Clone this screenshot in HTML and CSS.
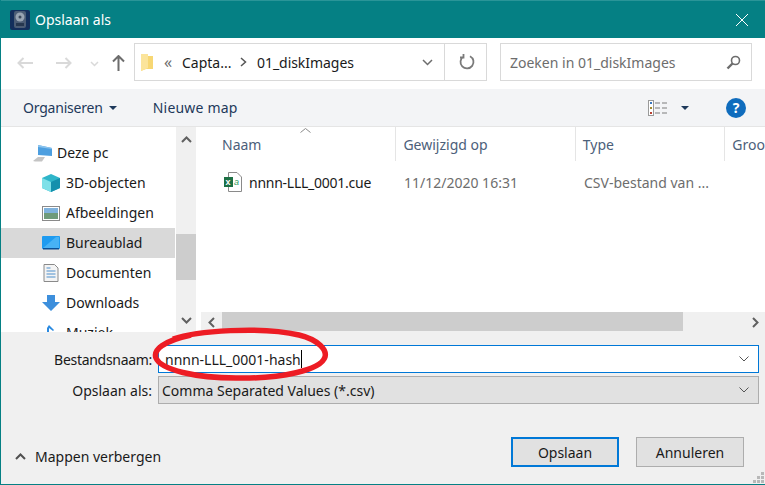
FILE: index.html
```html
<!DOCTYPE html>
<html lang="en">
<head>
    <meta name="viewport" content="width=device-width, initial-scale=1.0">
    <title>Opslaan als</title>
    <link rel="stylesheet" href="styles.css">
</head>
<body>
<div class="window">
    <div class="titlebar">
        <svg class="app-icon" width="20" height="20" viewBox="0 0 20 20">
            <rect width="20" height="20" rx="2" fill="#132f5c"/>
            <rect x="4" y="1" width="12" height="17" rx="2" fill="#4c5d75"/>
            <circle cx="10" cy="7" r="4.500" fill="#98a4b2"/>
            <circle cx="10" cy="7" r="1.500" fill="#3c4a5c"/>
            <rect x="6" y="13" width="8" height="3" fill="#26374f"/>
        </svg>
        <span class="title">Opslaan als</span>
        <svg class="close" width="12" height="12" viewBox="0 0 12 12"><path d="M0 0L12 12M12 0L0 12" stroke="#fff" fill="none"/></svg>
    </div>

    <div class="navbar">
        <svg class="nav-back" width="16" height="12" viewBox="0 0 16 12"><path d="M6.500 1L1.500 6L6.500 11M1.500 6H16" stroke="#d9d9d9" stroke-width="2" fill="none"/></svg>
        <svg class="nav-forward" width="16" height="12" viewBox="0 0 16 12"><path d="M9.500 1L14.500 6L9.500 11M14.500 6H0" stroke="#d9d9d9" stroke-width="2" fill="none"/></svg>
        <svg class="nav-recent" width="9" height="6" viewBox="0 0 9 6"><path d="M1 1L4.500 4.500L8 1" stroke="#d9d9d9" stroke-width="1.500" fill="none"/></svg>
        <svg class="nav-up" width="13" height="16" viewBox="0 0 13 16"><path d="M1 6.500L6.500 1L12 6.500M6.500 1V16" stroke="#6d6d6d" stroke-width="2" fill="none"/></svg>
        <div class="address">
            <svg class="folder" width="13" height="18" viewBox="0 0 13 18"><path d="M0 1H7V3H12V16H5L0 18Z" fill="#f7d774"/><path d="M0 1H7V15L0 18Z" fill="#fbe49b"/></svg>
            <span class="crumb-more">«</span>
            <span class="crumb-first">Capta...</span>
            <svg class="crumb-sep" width="7" height="10" viewBox="0 0 7 10"><path d="M1 1L5.500 5L1 9" stroke="#555" stroke-width="1.500" fill="none"/></svg>
            <span class="crumb-last">01_diskImages</span>
            <svg class="addr-drop" width="11" height="7" viewBox="0 0 11 7"><path d="M1 1L5.500 5.500L10 1" stroke="#6d6d6d" stroke-width="1.500" fill="none"/></svg>
            <div class="refresh">
                <svg width="16" height="16" viewBox="0 0 16 16"><path d="M4.500 2.500A6.500 6.500 0 1 0 11 2.200M4.500 0V3.500H1" stroke="#7a7a7a" stroke-width="1.800" fill="none"/></svg>
            </div>
        </div>
        <div class="search">
            <span>Zoeken in 01_diskImages</span>
            <svg width="15" height="15" viewBox="0 0 15 15"><circle cx="9.500" cy="5.500" r="4" stroke="#6d6d6d" stroke-width="1.600" fill="none"/><path d="M6.500 8.500L1.500 13.500" stroke="#6d6d6d" stroke-width="2.400"/></svg>
        </div>
    </div>

    <div class="toolbar">
        <span class="tool-org">Organiseren</span>
        <span class="caret"></span>
        <span class="tool-new">Nieuwe map</span>
        <svg class="view-icon" width="19" height="16" viewBox="0 0 19 16">
            <rect x=".5" y=".5" width="5" height="15" fill="#fff" stroke="#9a9a9a"/>
            <rect x="2" y="2" width="2" height="2" fill="#3a78c0"/>
            <rect x="2" y="7" width="2" height="2" fill="#a08a30"/>
            <rect x="2" y="12" width="2" height="2" fill="#b84030"/>
            <path d="M7 3H12M14 3H19M7 8H12M14 8H19M7 13H12M14 13H19" stroke="#7d7d7d"/>
        </svg>
        <span class="caret caret-view"></span>
        <span class="help">?</span>
    </div>

    <div class="main">
        <div class="sidebar">
            <div class="nav-row nav-root">
                <svg width="20" height="18" viewBox="0 0 20 18"><path d="M1 17L6 13H13L10 17.500H3Z" fill="#c4c4c4"/><path d="M6 1L20 4V12L6 11Z" fill="#4d9fe0"/><path d="M6 1L20 4V5L6 3Z" fill="#8cc4ee"/></svg>
                <span>Deze pc</span>
            </div>
            <div class="nav-row">
                <svg width="18" height="18" viewBox="0 0 18 18"><path d="M9 0L18 4V14L9 18L0 14V4Z" fill="#2fb5c9"/><path d="M0 4L9 8V18L0 14Z" fill="#7ee0e8"/><path d="M9 8L18 4V14L9 18Z" fill="#1590ad"/></svg>
                <span>3D-objecten</span>
            </div>
            <div class="nav-row">
                <svg width="18" height="15" viewBox="0 0 18 15"><rect x=".5" y=".5" width="17" height="14" fill="#fff" stroke="#8a8a8a"/><rect x="2" y="2" width="14" height="5" fill="#7fb2dd"/><rect x="2" y="7" width="14" height="6" fill="#6f9a7a"/></svg>
                <span>Afbeeldingen</span>
            </div>
            <div class="nav-row nav-selected">
                <svg width="18" height="14" viewBox="0 0 18 14"><rect width="18" height="13" rx="1" fill="#1e9bf0"/><rect x="1" y="12" width="16" height="1.500" fill="#0a4f96"/><path d="M1 12L14 1H17V12Z" fill="#47b2f5"/></svg>
                <span>Bureaublad</span>
            </div>
            <div class="nav-row">
                <svg width="15" height="18" viewBox="0 0 15 18"><path d="M.5.500H11L14.500 4V17.500H.5Z" fill="#f4f4f4" stroke="#8a8a8a"/><path d="M3 4H7M3 7H12M3 10H12M3 13H12" stroke="#4d8fcc"/></svg>
                <span>Documenten</span>
            </div>
            <div class="nav-row">
                <svg width="18" height="16" viewBox="0 0 18 16"><path d="M5 0H13V7H18L9 16L0 7H5Z" fill="#3d8fdc"/></svg>
                <span>Downloads</span>
            </div>
            <div class="nav-row">
                <svg width="18" height="18" viewBox="0 0 18 18"><path d="M7 1V13H5V4Z" fill="#2b8ae0"/><path d="M7 1L12 6L11 7L7 4Z" fill="#2b8ae0"/></svg>
                <span>Muziek</span>
            </div>
        </div>
        <div class="vscroll">
            <svg width="11" height="7" viewBox="0 0 11 7"><path d="M1 6L5.500 1.500L10 6" stroke="#606060" stroke-width="2" fill="none"/></svg>
            <div class="vthumb"></div>
            <svg class="vdown" width="11" height="7" viewBox="0 0 11 7"><path d="M1 1L5.500 5.500L10 1" stroke="#606060" stroke-width="2" fill="none"/></svg>
        </div>
        <div class="files">
            <div class="list">
                <div class="cols">
                    <svg class="sort" width="11" height="5" viewBox="0 0 11 5"><path d="M.5 4.500L5.500 .5L10.500 4.500" stroke="#8a8a8a" fill="none"/></svg>
                    <div class="col col-name">Naam</div>
                    <div class="col col-date">Gewijzigd op</div>
                    <div class="col col-type">Type</div>
                    <div class="col col-group">Groo</div>
                </div>
                <div class="file">
                    <div class="cell-name">
                        <svg width="18" height="20" viewBox="0 0 18 20"><path d="M4.500.5H13L17.500 5V19.500H4.500Z" fill="#fff" stroke="#8a8a8a"/><rect y="5" width="9" height="10" fill="#1d7044"/><text x="1.500" y="13" class="xl">x</text><text x="10" y="13" class="xa">a</text></svg>
                        <span class="file-name">nnnn-LLL_0001.cue</span>
                    </div>
                    <div class="cell-date">11/12/2020 16:31</div>
                    <div class="cell-type">CSV-bestand van ...</div>
                </div>
            </div>
            <div class="hscroll">
                <svg width="7" height="11" viewBox="0 0 7 11"><path d="M6 1L1.500 5.500L6 10" stroke="#606060" stroke-width="2" fill="none"/></svg>
                <div class="hthumb"></div>
                <svg width="7" height="11" viewBox="0 0 7 11"><path d="M1 1L5.500 5.500L1 10" stroke="#606060" stroke-width="2" fill="none"/></svg>
            </div>
        </div>
    </div>

    <div class="bottom">
        <div class="fields">
            <label class="field-label label-name">Bestandsnaam:</label>
            <div class="combo combo-active">
                <span>nnnn-LLL_0001-hash</span><span class="cursor"></span>
                <svg width="10" height="6" viewBox="0 0 10 6"><path d="M.5.5L5 5L9.500.5" stroke="#555" fill="none"/></svg>
            </div>
            <label class="field-label">Opslaan als:</label>
            <div class="combo combo-type">
                <span>Comma Separated Values (*.csv)</span>
                <svg width="10" height="6" viewBox="0 0 10 6"><path d="M.5.5L5 5L9.500.5" stroke="#555" fill="none"/></svg>
            </div>
        </div>
        <div class="actions">
            <svg class="hide-arrow" width="11" height="7" viewBox="0 0 11 7"><path d="M1 6L5.500 1.500L10 6" stroke="#505050" stroke-width="2" fill="none"/></svg>
            <span class="hide-folders">Mappen verbergen</span>
            <button type="button" class="btn btn-default">Opslaan</button>
            <button type="button" class="btn">Annuleren</button>
        </div>
        <svg class="grip" width="12" height="12" viewBox="0 0 12 12" fill="#b8b8b8">
            <rect x="9" y="0" width="3" height="3"/>
            <rect x="5" y="4" width="3" height="3"/><rect x="9" y="4" width="3" height="3"/>
            <rect x="1" y="8" width="3" height="3"/><rect x="5" y="8" width="3" height="3"/><rect x="9" y="8" width="3" height="3"/>
        </svg>
    </div>

    <!-- red marker drawn over the filename field -->
    <svg class="marker" width="180" height="58" viewBox="0 0 180 58">
        <path d="M22 13C45 5 110 0 148 9C168 14 176 24 174 31C170 44 130 53 85 52C45 52 10 44 5 32C2 24 12 15 40 9" fill="none" stroke="#ed1c24" stroke-width="5.500"/>
    </svg>
</div>
</body>
</html>
```

FILE: styles.css
```css
* {
    margin: 0;
    padding: 0;
    box-sizing: border-box;
}
body {
    font-family: 'Noto Sans', sans-serif;
    font-size: 14px;
    color: #1a1a1a;
    overflow: hidden;
}
svg {
    display: block;
    flex-shrink: 0;
}
.window {
    position: relative;
    width: 765px;
    height: 485px;
    display: flex;
    flex-direction: column;
    background: #fff;
    border-left: 1px solid #058084;
    border-bottom: 1px solid #058084;
}

/* title bar */
.titlebar {
    height: 38px;
    display: flex;
    align-items: center;
    flex-shrink: 0;
    padding-left: 9px;
    background: #058084;
    border-top: 1px solid #2a9598;
    color: #fff;
}
.title {
    margin-left: 5px;
}
.close {
    margin-left: auto;
    margin-right: 17px;
}

/* address row */
.navbar {
    height: 51px;
    display: flex;
    align-items: flex-start;
    padding-top: 5px;
    flex-shrink: 0;
}
.nav-back {
    margin: 14px 0 0 16px;
}
.nav-forward {
    margin: 14px 0 0 23px;
}
.nav-recent {
    margin: 18px 0 0 18px;
}
.nav-up {
    margin: 12px 0 0 13px;
}
.address {
    width: 353px;
    height: 38px;
    margin-left: 9px;
    display: flex;
    align-items: center;
    border: 1px solid #d9d9d9;
}
.folder {
    margin-left: 6px;
}
.crumb-more {
    width: 16px;
    margin-left: 10px;
    color: #6d6d6d;
    font-size: 16px;
    line-height: 1;
}
.crumb-first {
    width: 58px;
    margin-left: 2px;
}
.crumb-sep {
    margin-right: 10px;
}
.crumb-last {
    width: 160px;
    letter-spacing: -0.05px;
}
.addr-drop {
    margin-left: 5px;
}
.refresh {
    width: 42px;
    height: 100%;
    margin-left: auto;
    padding-left: 3px;
    display: flex;
    align-items: center;
    justify-content: center;
    border-left: 1px solid #d9d9d9;
}
.search {
    width: 252px;
    height: 38px;
    margin-left: 13px;
    padding: 0 10px 0 9px;
    display: flex;
    align-items: center;
    justify-content: space-between;
    border: 1px solid #d9d9d9;
    color: #6d6d6d;
}

/* toolbar */
.toolbar {
    height: 38px;
    display: flex;
    align-items: center;
    flex-shrink: 0;
    background: #f3f4f6;
    border-bottom: 1px solid #e5e5e5;
    color: #1e395b;
}
.tool-org {
    margin-left: 22px;
    letter-spacing: -0.2px;
}
.caret {
    width: 0;
    height: 0;
    margin-left: 6px;
    border-left: 4px solid transparent;
    border-right: 4px solid transparent;
    border-top: 4px solid #1e395b;
}
.tool-new {
    margin-left: 36px;
    letter-spacing: 0.2px;
}
.view-icon {
    margin-left: auto;
}
.caret-view {
    margin-left: 14px;
}
.help {
    width: 20px;
    height: 20px;
    margin: 0 19px 0 37px;
    border-radius: 50%;
    background: #0f6cbd;
    color: #fff;
    font-weight: bold;
    text-align: center;
    line-height: 20px;
}

/* tree and list */
.main {
    height: 205px;
    display: flex;
    flex-shrink: 0;
}
.sidebar {
    width: 174px;
    padding-top: 11px;
    overflow: hidden;
    margin-right: 1px;
}
.nav-row {
    height: 30px;
    padding-left: 41px;
    display: flex;
    align-items: center;
}
.nav-row svg {
    width: 18px;
}
.nav-row span {
    margin: -2px 0 0 6px;
}
.nav-root {
    padding-left: 31px;
}
.nav-root svg {
    width: 20px;
}
.nav-root span {
    margin-left: 5px;
}
.nav-selected {
    background: #d9d9d9;
}
.vscroll {
    width: 20px;
    display: flex;
    flex-direction: column;
    align-items: center;
    padding-top: 9px;
    background: #f0f0f0;
}
.vthumb {
    width: 100%;
    height: 46px;
    margin-top: 91px;
    background: #cdcdcd;
}
.vdown {
    margin-top: auto;
    margin-bottom: 8px;
}
.files {
    flex: 1;
    min-width: 0;
    margin-left: 5px;
    display: flex;
    flex-direction: column;
}
.list {
    flex: 1;
    overflow: hidden;
}
.cols {
    position: relative;
    height: 34px;
    display: flex;
    color: #4c607a;
}
.sort {
    position: absolute;
    left: 99px;
    top: 1px;
}
.col {
    display: flex;
    align-items: center;
    padding-left: 7px;
    border-right: 1px solid #e5e5e5;
}
.col-name {
    width: 196px;
    padding-left: 21px;
}
.col-date {
    width: 180px;
}
.col-type {
    width: 150px;
}
.col-group {
    flex: 1;
    border-right: none;
}
.file {
    height: 30px;
    margin-top: 6px;
    display: flex;
    align-items: center;
    color: #6d6d6d;
}
.cell-name {
    width: 196px;
    padding-left: 23px;
    display: flex;
    align-items: center;
    gap: 7px;
    color: #1a1a1a;
}
.file-name {
    letter-spacing: -0.25px;
}
.cell-date {
    width: 180px;
    padding-left: 7px;
}
.cell-type {
    padding-left: 7px;
}
.xl {
    font: bold 9px 'Liberation Sans', sans-serif;
    fill: #fff;
}
.xa {
    font: italic 9px 'Liberation Sans', sans-serif;
    fill: #2f9d62;
}
.hscroll {
    height: 20px;
    padding: 0 6px 0 7px;
    display: flex;
    align-items: center;
    background: #f0f0f0;
}
.hthumb {
    width: 461px;
    height: 19px;
    align-self: flex-start;
    margin: 0 auto 0 7px;
    background: #cdcdcd;
}

/* bottom panel */
.bottom {
    position: relative;
    flex: 1;
    background: #f0f0f0;
    padding-top: 13px;
}
.fields {
    display: grid;
    grid-template-columns: 151px 601px;
    grid-auto-rows: 28px;
    row-gap: 3px;
    column-gap: 6px;
    align-items: center;
}
.field-label {
    text-align: right;
}
.label-name {
    letter-spacing: -0.3px;
}
.combo {
    height: 28px;
    display: flex;
    align-items: center;
    padding: 0 9px 0 6px;
    border: 1px solid #adadad;
}
.combo svg {
    margin-left: auto;
}
.combo-active {
    background: #fff;
    border-color: #0078d7;
}
.combo-type {
    background: #e1e1e1;
    padding-left: 3px;
}
.cursor {
    width: 1px;
    height: 18px;
    background: #000;
}
.actions {
    height: 30px;
    margin-top: 33px;
    padding-left: 14px;
    display: flex;
    align-items: center;
}
.hide-arrow {
    margin-top: 8px;
}
.hide-folders {
    margin-left: 9px;
    margin-right: auto;
    padding-top: 8px;
}
.btn {
    width: 108px;
    height: 30px;
    margin-right: 21px;
    background: #e1e1e1;
    border: 1px solid #adadad;
    font-family: inherit;
    font-size: 14px;
    color: #1a1a1a;
}
.btn + .btn {
    margin-left: -4px;
}
.btn-default {
    border: 2px solid #0078d7;
}
.grip {
    position: absolute;
    right: 1px;
    bottom: 0;
}

/* over the content */
.marker {
    position: absolute;
    left: 150px;
    top: 326px;
}
```
